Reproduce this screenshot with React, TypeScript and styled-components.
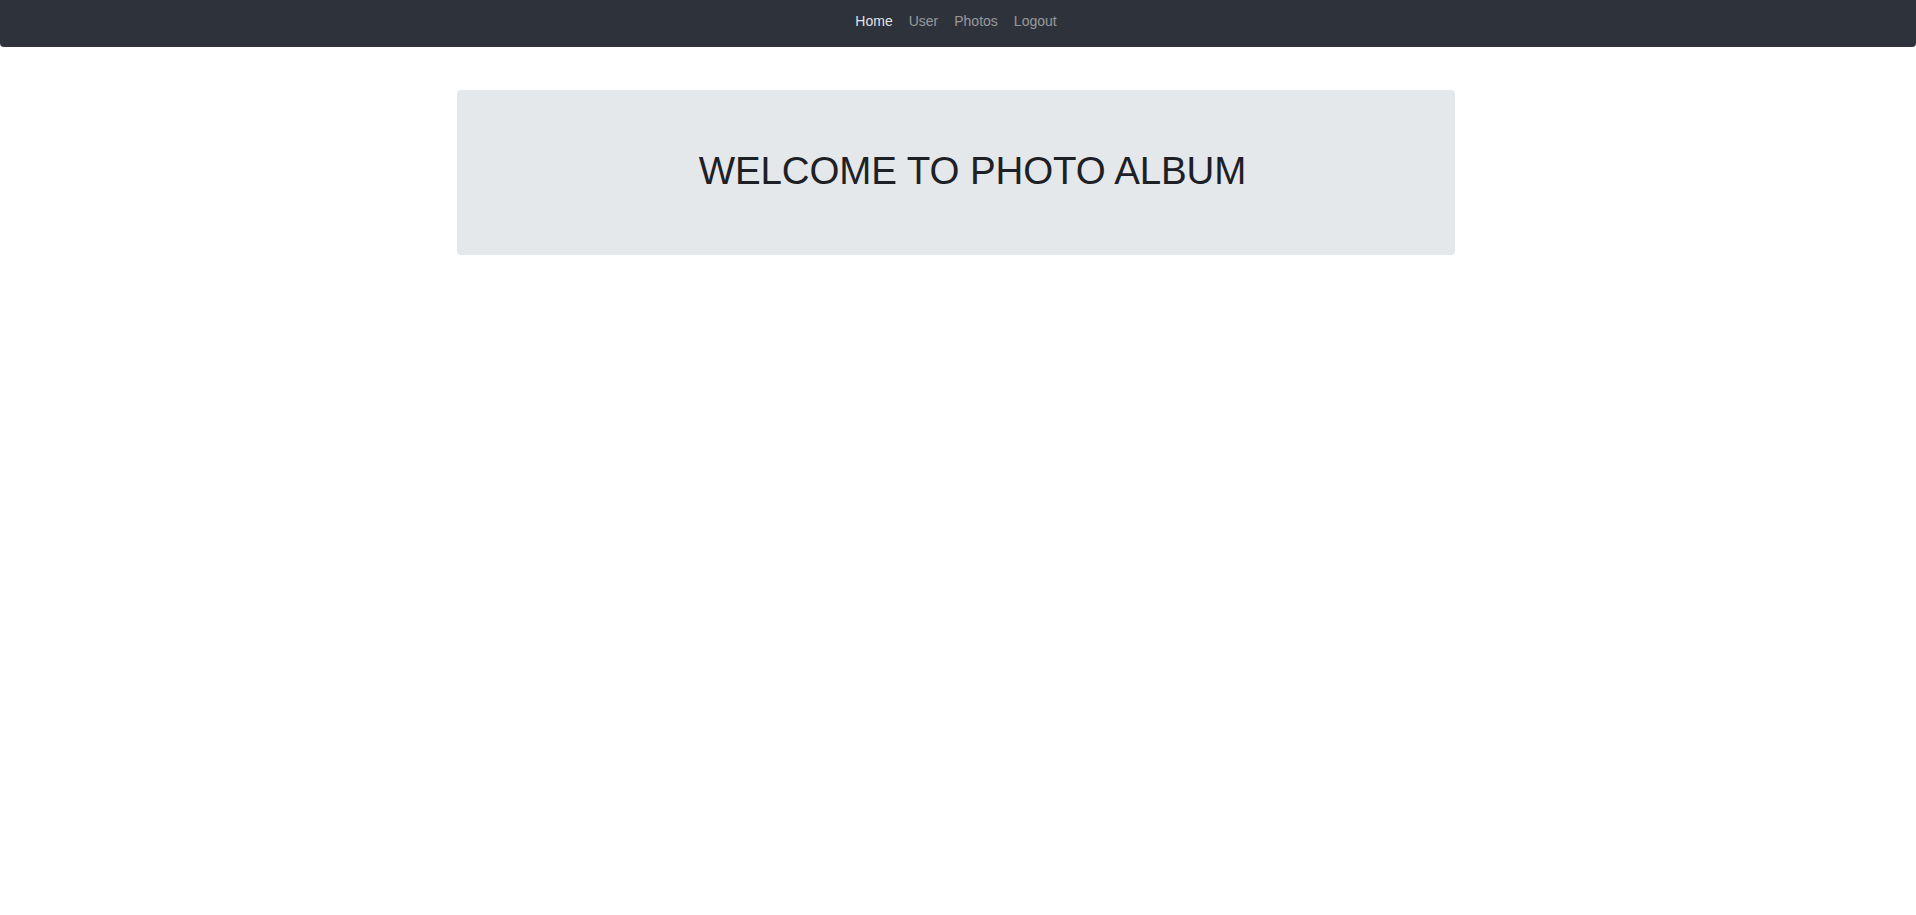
import React from "react";
import styled, { createGlobalStyle } from "styled-components";

const GlobalStyle = createGlobalStyle`
  html, body {
    margin: 0;
    padding: 0;
    background: #ffffff;
    font-family: "Liberation Sans", Arial, Helvetica, sans-serif;
  }
`;

const Navbar = styled.nav`
  height: 47px;
  background: #2e333b;
  border-radius: 0 0 4px 4px;
  display: flex;
  justify-content: center;
  align-items: center;
  padding-right: 4px;
`;

const NavList = styled.ul`
  list-style: none;
  margin: 0;
  padding: 0;
  display: flex;
  transform: translateY(-2px);
`;

const NavLink = styled.a<{ $active?: boolean }>`
  display: block;
  padding: 8px 8px;
  font-size: 14px;
  line-height: 17px;
  text-decoration: none;
  color: ${(p) => (p.$active ? "rgba(255,255,255,0.88)" : "rgba(255,255,255,0.5)")};
  cursor: pointer;
`;

const Main = styled.main`
  display: flex;
  justify-content: center;
  padding: 43px 4px 0 0;
`;

const Jumbotron = styled.section`
  width: 998px;
  height: 165px;
  box-sizing: border-box;
  padding-left: 33px;
  background: #e4e8eb;
  border-radius: 4px;
  display: flex;
  justify-content: center;
  align-items: center;
`;

const Title = styled.h1`
  margin: 0 0 3px;
  font-family: "Liberation Sans", Arial, Helvetica, sans-serif;
  font-weight: 400;
  font-size: 38.5px;
  line-height: 1.2;
  color: #1d2125;
  letter-spacing: -0.1px;
`;

export default function App() {
  return (
    <>
      <GlobalStyle />
      <Navbar>
        <NavList>
          <li><NavLink $active>Home</NavLink></li>
          <li><NavLink>User</NavLink></li>
          <li><NavLink>Photos</NavLink></li>
          <li><NavLink>Logout</NavLink></li>
        </NavList>
      </Navbar>
      <Main>
        <Jumbotron>
          <Title>WELCOME TO PHOTO ALBUM</Title>
        </Jumbotron>
      </Main>
    </>
  );
}
